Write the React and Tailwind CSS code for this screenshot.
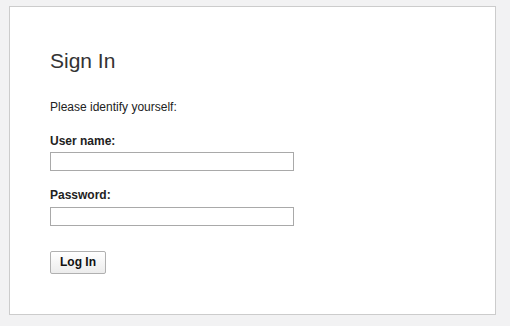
export default function App() {
  return (
    <div
      className="min-h-[326px] bg-[#f2f2f3] pt-[6px] pl-[9px] pr-[14px] pb-[11px]"
      style={{ fontFamily: '"Liberation Sans", Arial, sans-serif' }}
    >
      <div className="h-[309px] border border-[#cccccc] bg-white pl-[40px] pt-[42px]">
        <h1 className="text-[21px] leading-[24px] text-[#333333]">Sign In</h1>
        <p className="mt-[27px] text-[12px] leading-[15px] text-[#222222]">
          Please identify yourself:
        </p>
        <form className="mt-[19px]" onSubmit={(e) => e.preventDefault()}>
          <label className="block text-[12px] font-bold leading-[15px] text-[#222222]">
            User name:
          </label>
          <input
            type="text"
            className="mt-[3px] block h-[19px] w-[244px] border border-[#a9a9a9] bg-white outline-none"
          />
          <label className="mt-[17px] block text-[12px] font-bold leading-[15px] text-[#222222]">
            Password:
          </label>
          <input
            type="password"
            className="mt-[4px] block h-[19px] w-[244px] border border-[#a9a9a9] bg-white outline-none"
          />
          <button
            type="submit"
            className="mt-[25px] block h-[23px] w-[56px] rounded-[2px] border border-[#b0b0b0] bg-gradient-to-b from-white to-[#ececec] text-[12px] font-bold leading-[21px] text-[#111111]"
          >
            Log In
          </button>
        </form>
      </div>
    </div>
  );
}
